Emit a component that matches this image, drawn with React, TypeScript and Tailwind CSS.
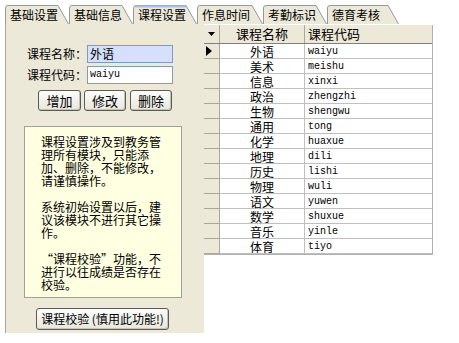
import React from 'react';

const tabs = ['基础设置', '基础信息', '课程设置', '作息时间', '考勤标识', '德育考核'];

const rows: [string, string][] = [
  ['外语', 'waiyu'],
  ['美术', 'meishu'],
  ['信息', 'xinxi'],
  ['政治', 'zhengzhi'],
  ['生物', 'shengwu'],
  ['通用', 'tong'],
  ['化学', 'huaxue'],
  ['地理', 'dili'],
  ['历史', 'lishi'],
  ['物理', 'wuli'],
  ['语文', 'yuwen'],
  ['数学', 'shuxue'],
  ['音乐', 'yinle'],
  ['体育', 'tiyo'],
];

const Tab = ({ label, active, w }: { label: string; active: boolean; w: number }) => (
  <div className="relative h-[19px] shrink-0" style={{ width: w }}>
    <svg className="absolute inset-0" width={w} height={19}>
      <path
        d={`M0.5,19 L0.5,3 Q0.5,0.5 3,0.5 L${w - 11},0.5 L${w - 0.5},19`}
        fill="#ECE9D8"
        stroke="#919B9C"
      />
      {active && <path d={`M2,1.5 L${w - 11},1.5`} stroke="#A9C3EC" strokeWidth="2" />}
    </svg>
    <span className="relative block pl-[5px] leading-[19px] text-[12px]">{label}</span>
  </div>
);

const Btn = ({ children, className }: { children: React.ReactNode; className: string }) => (
  <button
    className={`flex items-center justify-center whitespace-nowrap rounded-[3px] border border-[#5a5a5a] bg-gradient-to-b from-[#fdfdfb] to-[#e8e6dc] leading-none shadow-[inset_-1px_-1px_0_#c6c3b5] ${className}`}
  >
    {children}
  </button>
);

const App = () => {
  return (
    <div className="w-[459px] h-[343px] bg-white text-black font-['Noto_Sans_CJK_SC',sans-serif] overflow-hidden">
      {/* tab strip */}
      <div className="flex pl-[5px] pt-[5px] h-[24px]">
        {tabs.map((t, i) => (
          <Tab key={t} label={t} active={i === 2} w={i === 3 ? 66 : i === 5 ? 72 : 64} />
        ))}
      </div>

      <div className="flex ml-[5px]">
        {/* left panel */}
        <div className="w-[199px] h-[309px] shrink-0 bg-[#ECE9D8] border-l border-[#ACA899] pt-[21px]">
          <div className="flex items-center h-[18px]">
            <span className="w-[81px] text-right text-[12px] leading-[18px]">课程名称：</span>
            <div className="w-[86px] h-[18px] border border-[#7F9DB9] bg-[#D6E0FE] px-[2px] text-[12px] leading-[16px]">外语</div>
          </div>
          <div className="flex items-center h-[18px] mt-[3px]">
            <span className="w-[81px] text-right text-[12px] leading-[18px]">课程代码：</span>
            <div className="w-[86px] h-[18px] border border-[#7F9DB9] bg-white px-[2px] font-['Liberation_Mono',monospace] text-[10px] leading-[16px]">waiyu</div>
          </div>
          <div className="flex mt-[6px] ml-[32px] gap-[3px]">
            <Btn className="w-[43px] h-[21px] text-[13px]">增加</Btn>
            <Btn className="w-[42px] h-[21px] text-[13px]">修改</Btn>
            <Btn className="w-[42px] h-[21px] ml-[1px] text-[13px]">删除</Btn>
          </div>
          <div className="mt-[15px] ml-[18px] w-[158px] h-[172px] border border-[#A0A0A0] bg-[#FFFFE1] pt-[8px] pl-[16px] text-[12px] leading-[13px]">
            <p>课程设置涉及到教务管<br />理所有模块，只能添<br />加、删除，不能修改，<br />请谨慎操作。</p>
            <p className="mt-[13px]">系统初始设置以后，建<br />议该模块不进行其它操<br />作。</p>
            <p className="mt-[13px]">“课程校验”功能，不<br />进行以往成绩是否存在<br />校验。</p>
          </div>
          <Btn className="mt-[10px] ml-[30px] w-[133px] h-[22px] text-[12px]">课程校验 (慎用此功能!)</Btn>
        </div>

        {/* grid */}
        <div className="mt-[1px] w-[229px] self-start border-r border-b border-[#B0B0B0]">
          <div className="flex h-[19px] bg-[#ECE9D8] border-b border-[#808080] text-[13px]">
            <div className="w-[16px] border-r border-[#ACA899] flex items-center justify-center">
              <svg width="7" height="4"><path d="M0,0 L7,0 L3.5,4 Z" fill="#000" /></svg>
            </div>
            <div className="w-[85px] border-r border-[#ACA899] text-center leading-[18px]">课程名称</div>
            <div className="flex-1 pl-[3px] leading-[18px]">课程代码</div>
          </div>
          {rows.map(([name, code], i) => (
            <div key={code} className="flex h-[15px]">
              <div className="w-[16px] bg-[#ECE9D8] border-r border-b border-[#ACA899] flex items-center pl-[2px]">
                {i === 0 && <svg width="6" height="10"><path d="M0,0 L6,5 L0,10 Z" fill="#000" /></svg>}
              </div>
              <div className="w-[85px] border-r border-b border-[#C0C0C0] pt-[2px] text-center text-[12px] leading-[12px]">{name}</div>
              <div className="flex-1 border-b border-[#C0C0C0] pt-[2px] pl-[3px] font-['Liberation_Mono',monospace] text-[10px] leading-[12px]">{code}</div>
            </div>
          ))}
        </div>
      </div>
    </div>
  );
};

export default App;
